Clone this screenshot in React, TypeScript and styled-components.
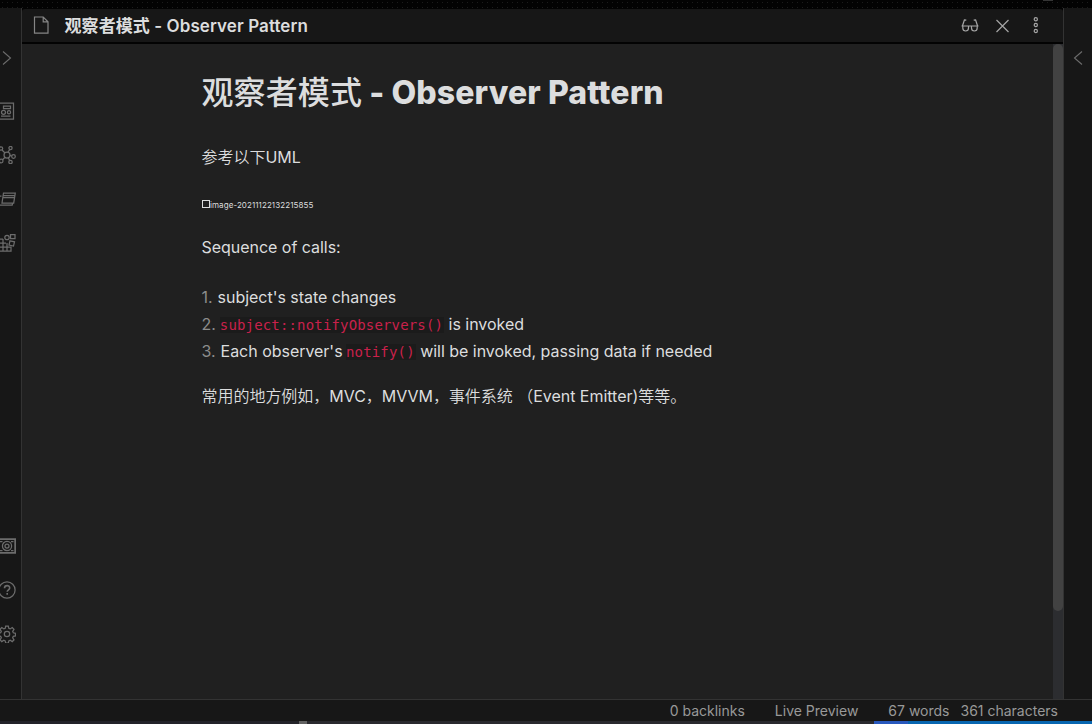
import React from "react";
import styled, { createGlobalStyle } from "styled-components";

const GlobalStyle = createGlobalStyle`
  * { box-sizing: border-box; }
  body { margin: 0; background: #171717; overflow: hidden; }
`;

const Shell = styled.div`
  width: 1092px;
  height: 724px;
  display: flex;
  flex-direction: column;
  overflow: hidden;
  background: #171717;
  color: #dcddde;
  font-family: Inter, "Noto Sans CJK SC", sans-serif;
`;

const TitleBar = styled.div`
  flex: 0 0 8px;
  display: flex;
  justify-content: flex-end;
  padding-right: 39px;
  background-color: #030303;
  background-image: radial-gradient(#1b1b1b 0.6px, transparent 0.9px);
  background-size: 5px 5px;
`;

const WindowMark = styled.div`
  width: 10px;
  height: 1px;
  background: #353535;
`;

const Workspace = styled.div`
  flex: 0 0 691px;
  display: flex;
`;

const Rail = styled.nav<{ $side: "left" | "right" }>`
  flex: 0 0 ${(p) => (p.$side === "left" ? 22 : 29)}px;
  display: flex;
  flex-direction: column;
  overflow: hidden;
  padding-top: 41px;
  border-${(p) => (p.$side === "left" ? "right" : "left")}: 1px solid #333;
  color: #6c6c6c;
`;

const RailIcon = styled.svg<{ $top?: number }>`
  flex: none;
  width: 18px;
  height: 18px;
  margin: ${(p) => p.$top ?? 26}px 0 0 -2px;
  fill: none;
  stroke: currentColor;
  stroke-width: 1.25;
`;

const Chevron = styled.svg<{ $left: number }>`
  flex: none;
  width: 10px;
  height: 18px;
  margin-left: ${(p) => p.$left}px;
  fill: none;
  stroke: currentColor;
  stroke-width: 1.1;
`;

const Pane = styled.main`
  flex: 1;
  min-width: 0;
  display: flex;
  flex-direction: column;
  padding-top: 1px;
  background: #030303;
`;

const PaneHeader = styled.header`
  flex: 0 0 33px;
  display: flex;
  align-items: flex-start;
  background: #171717;
  border-radius: 3px 3px 0 0;
  padding: 7px 19px 0 11px;
`;

const PaneTitle = styled.div`
  flex: 1;
  margin-left: 13.5px;
  font-size: 17px;
  line-height: 20px;
  font-weight: 600;
  letter-spacing: 0.08px;
  white-space: nowrap;
`;

const HeaderIcon = styled.svg<{ $gap?: number; $color?: string }>`
  flex: none;
  width: 18px;
  height: 18px;
  margin-left: ${(p) => p.$gap ?? 0}px;
  fill: none;
  stroke: ${(p) => p.$color ?? "#a5a5a5"};
  stroke-width: 1.2;
`;

const Body = styled.div`
  flex: 1;
  display: flex;
  margin-top: 2px;
  background: #202020;
`;

const Note = styled.article`
  flex: 1;
  padding: 25px 0 0 179.5px;
  font-size: 16px;
  line-height: 27px;
  letter-spacing: -0.03px;
  white-space: nowrap;
`;

const Heading = styled.h1`
  margin: 0;
  height: 46px;
  line-height: 47px;
  font-size: 32px;
  font-weight: 800;
  letter-spacing: 0.11px;
`;

const Han = styled.span<{ $weight: number }>`
  font-weight: ${(p) => p.$weight};
`;

const Paragraph = styled.p<{ $top: number }>`
  margin: ${(p) => p.$top}px 0 0;
  height: 27px;
`;

const BrokenImage = styled.div`
  display: flex;
  align-items: center;
  height: 14px;
  margin: 27px 0 0 0.5px;
  font-size: 8px;
  line-height: 14px;
  letter-spacing: 0.08px;
`;

const BrokenBox = styled.span`
  width: 8px;
  height: 8px;
  margin-top: -2px;
  border: 1px solid #dcddde;
`;

const List = styled.ol`
  margin: 23px 0 0;
  padding: 0;
  list-style: none;
`;

const Item = styled.li`
  height: 27px;
`;

const Marker = styled.span`
  color: #8c8c8c;
  margin-right: 5px;
`;

const Code = styled.code`
  margin-left: -1px;
  padding-right: 1px;
  background: #1b1b1b;
  color: #c9214b;
  font-family: "DejaVu Sans Mono", monospace;
  font-size: 14px;
  letter-spacing: 0.16px;
`;

const Scrollbar = styled.div`
  flex: 0 0 10px;
  background: #2c2d30;
`;

const Thumb = styled.div`
  height: 567px;
  border-radius: 5px;
  background: #424242;
`;

const StatusBar = styled.footer`
  flex: 0 0 22px;
  height: 22px;
  min-height: 0;
  display: flex;
  justify-content: flex-end;
  padding-right: 34px;
  border-top: 1px solid #333;
  color: #999;
  font-size: 14px;
  line-height: 21px;
  white-space: nowrap;
`;

const Status = styled.span<{ $gap: number }>`
  height: 21px;
  margin-top: -0.5px;
  margin-left: ${(p) => p.$gap}px;
`;

const Desktop = styled.div`
  flex: 0 0 3px;
  display: flex;
  background: #242429;
`;

const DesktopPart = styled.div<{ $width: number; $color: string }>`
  width: ${(p) => p.$width}px;
  background: ${(p) => p.$color};
`;

export default function App() {
  return (
    <Shell>
      <GlobalStyle />
      <TitleBar><WindowMark /></TitleBar>
      <Workspace>
        <Rail $side="left">
          <Chevron $left={2} viewBox="0 0 10 18"><path d="M1 2.5 8.5 9 1 15.5" /></Chevron>
          <RailIcon $top={35} viewBox="0 0 18 18">
            <path d="M1 1h14.5v16H1zM5.5 4h7v2.5h-7zM3 14h9.5" />
            <circle cx="5.5" cy="10.3" r="2" /><circle cx="11" cy="10.3" r="1.6" />
          </RailIcon>
          <RailIcon viewBox="0 0 18 18">
            <circle cx="9" cy="9" r="3" /><circle cx="3" cy="2.5" r="1.7" /><circle cx="12.5" cy="2" r="1.6" />
            <circle cx="15.5" cy="10.5" r="1.8" /><circle cx="12.5" cy="16" r="1.7" /><circle cx="3.2" cy="15" r="1.8" />
            <path d="m4 4 3 3M11.7 3.7 10 6M12 9.4l1.7.6M10.3 11.7l1.3 2.7M7 11.3l-2.4 2.4" />
          </RailIcon>
          <RailIcon viewBox="0 0 18 18">
            <path d="M5.5 3h11.8l-1.6 10H4zM5 5.6h11.8M4.6 7.6h11.8M3.5 6H1.5L0 15h14.2l.5-2" />
          </RailIcon>
          <RailIcon viewBox="0 0 18 18">
            <path d="M1 5v12h12v-4.5M1 9h7M1 13h12M5 5v12M9 9v8M1 5h4M12.5.7h4.5v4h-4.5zM12 6.8l4.5 1-1 4.3-4.5-1z" />
            <circle cx="9" cy="3.5" r="2.2" />
          </RailIcon>
          <RailIcon $top={285} viewBox="0 0 18 18">
            <path d="M0 2.2h17.2v13.6H0z" strokeWidth="1.8" /><path d="M2 4.5h2.5M13 4.5h2.5M2 13.5h2.5M13 13.5h2.5" />
            <circle cx="9" cy="9" r="4.6" /><circle cx="9" cy="9" r="2" />
          </RailIcon>
          <RailIcon viewBox="0 0 18 18">
            <circle cx="9" cy="9" r="8.1" />
            <path d="M6.5 7.2c0-3.4 5.2-3.3 5.2-.2 0 1.8-2.5 1.8-2.5 3.8M9.2 12v1.7" strokeWidth="1.6" />
          </RailIcon>
          <RailIcon viewBox="0 0 18 18">
            <circle cx="9" cy="9" r="2.7" />
            <path d="M7.7 1h2.6l.5 2.3 1.4.6 2-1.3 1.8 1.8-1.3 2 .6 1.4 2.2.5v2.6l-2.2.5-.6 1.4 1.3 2-1.8 1.8-2-1.3-1.4.6-.5 2.2H7.7l-.5-2.2-1.4-.6-2 1.3L2 14.8l1.3-2-.6-1.4-2.2-.5V8.3l2.2-.5.6-1.4-1.3-2 1.8-1.8 2 1.3 1.4-.6z" />
          </RailIcon>
        </Rail>
        <Pane>
          <PaneHeader>
            <HeaderIcon $color="#858585" viewBox="0 0 18 18"><path d="M1.5 1h8.7l4.8 4.8v11.4H1.5zM10.2 1v4.8H15" /></HeaderIcon>
            <PaneTitle>观察者模式 - Observer Pattern</PaneTitle>
            <HeaderIcon viewBox="0 0 18 18">
              <path d="M5.3 4.2 3.4 4 1.4 10M12.7 4.2l1.9-.2 2 6M.5 10h17M1.8 10v2c0 4 5.7 4 5.7 0v-2M10.5 10v2c0 4 5.7 4 5.7 0v-2" />
            </HeaderIcon>
            <HeaderIcon $gap={14} viewBox="0 0 18 18"><path d="m3.5 4 12 12M15.5 4l-12 12" /></HeaderIcon>
            <HeaderIcon $gap={15} viewBox="0 0 18 18">
              <circle cx="9.8" cy="3.2" r="1.6" /><circle cx="9.8" cy="9" r="1.6" /><circle cx="9.8" cy="15" r="1.6" />
            </HeaderIcon>
          </PaneHeader>
          <Body>
            <Note>
              <Heading><Han $weight={500}>观察者模式</Han> - Observer Pattern</Heading>
              <Paragraph $top={29}><Han $weight={350}>参考以下</Han>UML</Paragraph>
              <BrokenImage><BrokenBox />image-20211122132215855</BrokenImage>
              <Paragraph $top={22}>Sequence of calls:</Paragraph>
              <List>
                <Item><Marker>1.</Marker>subject's state changes</Item>
                <Item><Marker>2.</Marker><Code>subject::notifyObservers()</Code> is invoked</Item>
                <Item><Marker>3.</Marker>Each observer's <Code>notify()</Code> will be invoked, passing data if needed</Item>
              </List>
              <Paragraph $top={18}>
                <Han $weight={350}>常用的地方例如，</Han>MVC<Han $weight={350}>，</Han>MVVM<Han $weight={350}>，事件系统 （</Han>Event Emitter)<Han $weight={350}>等等。</Han>
              </Paragraph>
            </Note>
            <Scrollbar><Thumb /></Scrollbar>
          </Body>
        </Pane>
        <Rail $side="right">
          <Chevron $left={9} viewBox="0 0 10 18"><path d="M9 2.5 1.5 9 9 15.5" /></Chevron>
        </Rail>
      </Workspace>
      <StatusBar>
        <Status $gap={0}>0 backlinks</Status>
        <Status $gap={30}>Live Preview</Status>
        <Status $gap={30}>67 words</Status>
        <Status $gap={11}>361 characters</Status>
      </StatusBar>
      <Desktop>
        <DesktopPart $width={299} $color="#232329" />
        <DesktopPart $width={8} $color="#626262" />
        <DesktopPart $width={567} $color="#29292e" />
        <DesktopPart $width={34} $color="#2858bd" />
        <DesktopPart $width={184} $color="#0866b0" />
      </Desktop>
    </Shell>
  );
}
